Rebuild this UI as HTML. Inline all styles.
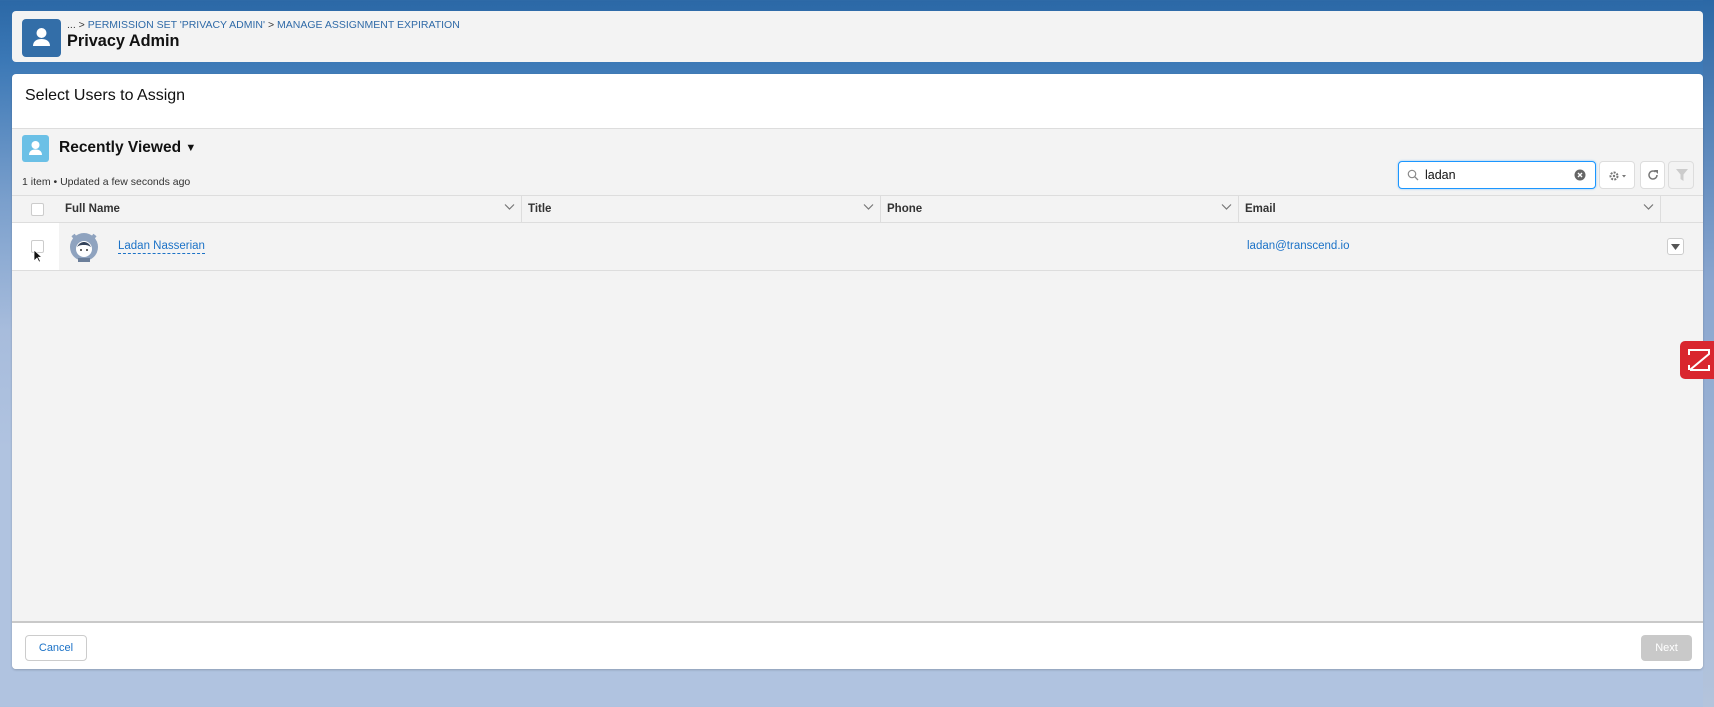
<!DOCTYPE html>
<html><head><meta charset="utf-8"><style>
*{box-sizing:border-box;margin:0;padding:0}
body{width:1714px;height:707px;overflow:hidden;position:relative;font-family:"Liberation Sans",sans-serif;background:linear-gradient(180deg,#2b68a6 0px,#3b78b6 60px,#7a9fcc 200px,#a7bcdc 330px,#b0c3e0 450px,#b0c3e0 707px)}
.card{position:absolute;left:12px;right:11px;background:#f3f3f3;border-radius:4px}
.hdr{top:11px;height:51px}
.ico{position:absolute;left:10px;top:8px;width:39px;height:38px;background:#336ea8;border-radius:4px}
.bc{position:absolute;left:55px;top:8px;font-size:10.5px;color:#2f6aa7}
.bc span{color:#333}
.pt{position:absolute;left:55px;top:21px;font-size:16.3px;font-weight:bold;color:#111}
.main{top:74px;height:595px;background:#fff;overflow:hidden;box-shadow:0 1px 2px rgba(0,0,0,.2)}
.sel{position:absolute;left:13px;top:13px;font-size:16px;color:#111}
.list{position:absolute;left:0;right:0;top:54px;height:495px;background:#f3f3f3;border-top:1px solid #ddd;border-bottom:2px solid #c9c9c9}
.lico{position:absolute;left:10px;top:6px;width:27px;height:27px;background:#6bc0e6;border-radius:3px}
.rv{position:absolute;left:47px;top:10px;font-size:15.5px;font-weight:bold;color:#111}
.cnt{position:absolute;left:10px;top:47px;font-size:10.5px;color:#333}
.sb{position:absolute;left:1386px;top:32px;width:198px;height:28px;background:#fff;border:1px solid #1b96ff;border-radius:4px;box-shadow:0 0 2px #8cc4f5}
.sb .t{position:absolute;left:26px;top:6px;font-size:12.5px;color:#111}
.btn{position:absolute;top:32px;height:28px;background:#fff;border:1px solid #ddd;border-radius:4px}
.th{position:absolute;left:0;right:0;top:66px;height:28px;border-top:1px solid #ddd;border-bottom:1px solid #ddd;background:#f3f3f3}
.col{position:absolute;top:0;height:27px;border-right:1px solid #ddd;font-size:11.5px;font-weight:bold;color:#333;padding:7px 0 0 6px}
.chev{position:absolute;right:6px;top:7px}
.row{position:absolute;left:0;right:0;top:94px;height:48px;border-bottom:1px solid #ddd}
.cb{position:absolute;width:13px;height:13px;background:#fff;border:1px solid #ccc;border-radius:2px}
.foot{position:absolute;left:0;right:0;top:551px;height:44px;background:#fff}
.cancel{position:absolute;left:13px;top:10px;width:62px;height:26px;border:1px solid #ccc;border-radius:4px;font-size:11px;color:#1b72c7;text-align:center;line-height:24px;background:#fff}
.next{position:absolute;right:11px;top:10px;width:51px;height:26px;border-radius:4px;background:#c9c9c9;color:#fff;font-size:11px;text-align:center;line-height:26px}
</style></head><body>
<div style="position:absolute;right:0;top:0;width:11px;height:707px;background:linear-gradient(180deg,#2b68a6,#8aa6cf 40%,#b4c4dc)"></div>
<div class="card hdr">
 <div class="ico"><svg width="39" height="38" viewBox="0 0 39 38"><circle cx="19.5" cy="14" r="5" fill="#fff"/><path d="M11 27c0-5 4-7 8.5-7s8.5 2 8.5 7z" fill="#fff"/></svg></div>
 <div class="bc"><span>... &gt; </span>PERMISSION SET 'PRIVACY ADMIN' <span>&gt;</span> MANAGE ASSIGNMENT EXPIRATION</div>
 <div class="pt">Privacy Admin</div>
</div>
<div class="card main">
 <div class="sel">Select Users to Assign</div>
 <div class="list">
  <div class="lico"><svg width="27" height="27" viewBox="0 0 27 27"><circle cx="13.5" cy="10" r="4" fill="#fff"/><path d="M7 20c0-4 3-5.5 6.5-5.5S20 16 20 20z" fill="#fff"/></svg></div>
  <div class="rv">Recently Viewed <span style="font-size:11px;position:relative;top:-1px">&#9660;</span></div>
  <div class="cnt">1 item • Updated a few seconds ago</div>
  <div class="sb"><svg style="position:absolute;left:8px;top:7px" width="12" height="12" viewBox="0 0 12 12"><circle cx="5" cy="5" r="3.7" fill="none" stroke="#888" stroke-width="1.2"/><path d="M7.7 7.7L11 11" stroke="#888" stroke-width="1.3"/></svg><div class="t">ladan</div><svg style="position:absolute;right:9px;top:7px" width="12" height="12" viewBox="0 0 12 12"><circle cx="6" cy="6" r="5.5" fill="#666"/><path d="M4 4l4 4M8 4l-4 4" stroke="#fff" stroke-width="1.4"/></svg></div>
  <div class="btn" style="left:1587px;width:36px"><svg style="position:absolute;left:8px;top:8px" width="20" height="12" viewBox="0 0 20 12"><circle cx="6" cy="6" r="3.5" fill="none" stroke="#777" stroke-width="2" stroke-dasharray="2 1.2"/><circle cx="6" cy="6" r="1.2" fill="#777"/><path d="M14 5h4l-2 2.5z" fill="#777"/></svg></div>
  <div class="btn" style="left:1628px;width:25px"><svg style="position:absolute;left:6px;top:7px" width="12" height="12" viewBox="0 0 12 12"><path d="M10 6a4 4 0 1 1-1.5-3.1" fill="none" stroke="#777" stroke-width="1.5"/><path d="M7 1h4v4z" fill="#777"/></svg></div>
  <div class="btn" style="left:1656px;width:26px;background:#f3f3f3"><svg style="position:absolute;left:7px;top:7px" width="12" height="12" viewBox="0 0 12 12"><path d="M0 0h12L7.5 5.5V12L4.5 10V5.5z" fill="#ccc"/></svg></div>
  <div class="th">
   <div class="cb" style="left:19px;top:7px"></div>
   <div class="col" style="left:47px;width:463px;border-left:none">Full Name<svg class="chev" width="11" height="8" viewBox="0 0 11 8"><path d="M1 1.5l4.5 4.5 4.5-4.5" fill="none" stroke="#777" stroke-width="1.2"/></svg></div>
   <div class="col" style="left:510px;width:359px">Title<svg class="chev" width="11" height="8" viewBox="0 0 11 8"><path d="M1 1.5l4.5 4.5 4.5-4.5" fill="none" stroke="#777" stroke-width="1.2"/></svg></div>
   <div class="col" style="left:869px;width:358px">Phone<svg class="chev" width="11" height="8" viewBox="0 0 11 8"><path d="M1 1.5l4.5 4.5 4.5-4.5" fill="none" stroke="#777" stroke-width="1.2"/></svg></div>
   <div class="col" style="left:1227px;width:422px">Email<svg class="chev" width="11" height="8" viewBox="0 0 11 8"><path d="M1 1.5l4.5 4.5 4.5-4.5" fill="none" stroke="#777" stroke-width="1.2"/></svg></div>
  </div>
  <div class="row">
   <div style="position:absolute;left:0;top:0;width:47px;height:47px;background:#fff"></div>
   <div class="cb" style="left:19px;top:17px"></div>
   <svg style="position:absolute;left:21px;top:26px" width="10" height="14" viewBox="0 0 10 14"><path d="M1 1v11l3-3 2 4 1.5-.7-2-4H9z" fill="#111" stroke="#fff" stroke-width=".8"/></svg>
   <svg style="position:absolute;left:56px;top:8px" width="32" height="32" viewBox="0 0 32 32"><circle cx="16" cy="16" r="14" fill="#8fa3bf"/><path d="M5 4l4 5M27 4l-4 5" stroke="#8fa3bf" stroke-width="4"/><circle cx="16" cy="18" r="8" fill="#fff"/><path d="M9 16c2-4 5-5 7-5s5 1 7 5c-3-2-5-2-7-2s-5 0-7 2z" fill="#34435a"/><circle cx="13" cy="19" r="1" fill="#333"/><circle cx="19" cy="19" r="1" fill="#333"/><rect x="10" y="27" width="12" height="4" fill="#6c7f9a"/></svg>
   <div style="position:absolute;left:106px;top:17px;font-size:11.5px;color:#1b72c7;border-bottom:1px dashed #1b72c7;line-height:13px">Ladan Nasserian</div>
   <div style="position:absolute;left:1235px;top:17px;font-size:11.5px;color:#1b72c7">ladan@transcend.io</div>
   <div style="position:absolute;left:1655px;top:15px;width:17px;height:17px;background:#fff;border:1px solid #ccc;border-radius:3px"><svg style="position:absolute;left:3px;top:5px" width="9" height="6" viewBox="0 0 9 6"><path d="M0 0h9L4.5 6z" fill="#555"/></svg></div>
  </div>
 </div>
 <div class="foot"><div class="cancel">Cancel</div><div class="next">Next</div></div>
</div>
<div style="position:absolute;left:1680px;top:341px;width:40px;height:38px;background:#d9262e;border-radius:5px"><svg style="position:absolute;left:8px;top:8px" width="22" height="22" viewBox="0 0 22 22"><path d="M1 6V1h20v4L3 20v1h18v-5M1 16v5" fill="none" stroke="#fff" stroke-width="2"/></svg></div>
</body></html>
